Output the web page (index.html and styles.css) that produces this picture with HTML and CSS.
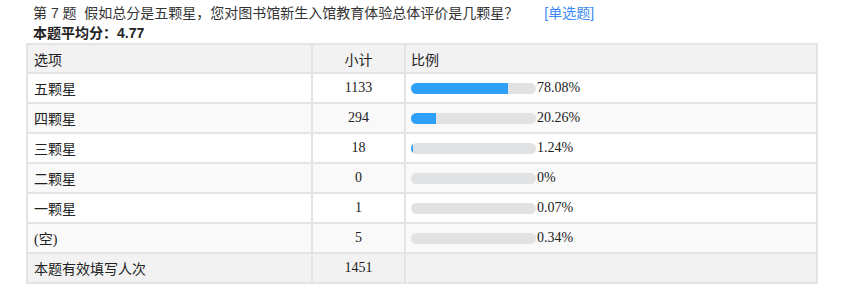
FILE: index.html
```html
<!DOCTYPE html>
<html lang="zh-CN">
<head>
<meta charset="utf-8">
<title>第7题</title>
<link rel="stylesheet" href="styles.css">
</head>
<body>
<div class="wrap">
  <div class="title">
    <div class="q">第 7 题&nbsp;&nbsp;假如总分是五颗星，您对图书馆新生入馆教育体验总体评价是几颗星？<span class="type">[单选题]</span></div>
    <div class="avg">本题平均分：4.77</div>
  </div>
  <table class="stats">
    <colgroup><col class="c1"><col class="c2"><col class="c3"></colgroup>
    <tr class="head"><td>选项</td><td class="num">小计</td><td class="pct">比例</td></tr>
    <tr class="odd"><td>五颗星</td><td class="num">1133</td><td class="pct"><div class="cell"><span class="bar"><span class="fill" style="width:97px"></span></span>78.08%</div></td></tr>
    <tr class="even"><td>四颗星</td><td class="num">294</td><td class="pct"><div class="cell"><span class="bar"><span class="fill" style="width:25px"></span></span>20.26%</div></td></tr>
    <tr class="odd"><td>三颗星</td><td class="num">18</td><td class="pct"><div class="cell"><span class="bar"><span class="fill" style="width:1.5px"></span></span>1.24%</div></td></tr>
    <tr class="even"><td>二颗星</td><td class="num">0</td><td class="pct"><div class="cell"><span class="bar"><span class="fill" style="width:0px"></span></span>0%</div></td></tr>
    <tr class="odd"><td>一颗星</td><td class="num">1</td><td class="pct"><div class="cell"><span class="bar"><span class="fill" style="width:0px"></span></span>0.07%</div></td></tr>
    <tr class="even"><td>(空)</td><td class="num">5</td><td class="pct"><div class="cell"><span class="bar"><span class="fill" style="width:0px"></span></span>0.34%</div></td></tr>
    <tr class="foot"><td>本题有效填写人次</td><td class="num">1451</td><td class="pct"></td></tr>
  </table>
</div>
</body>
</html>
```
FILE: styles.css
```css
html, body {
  margin: 0;
  padding: 0;
  background: #fff;
}
.wrap {
  padding: 3px 0 0 26px;
}
.title {
  padding-left: 7px;
  font-family: "Liberation Sans", "Noto Sans CJK SC", sans-serif;
  font-size: 14px;
  line-height: 20px;
  color: #333;
}
.type {
  color: #3d8af7;
  margin-left: 26px;
}
.avg {
  font-weight: bold;
  color: #222;
}
.stats {
  width: 792px;
  border-spacing: 0;
  border-top: 2px solid #e4e4e4;
  border-left: 2px solid #e4e4e4;
  table-layout: fixed;
  font-family: "Liberation Serif", "Noto Sans CJK SC", serif;
  font-size: 14px;
  color: #222;
}
.c1 { width: 285px; }
.c2 { width: 93px; }
.stats td {
  height: 28px;
  padding: 0 6px;
  border-right: 2px solid #e4e4e4;
  border-bottom: 2px solid #e4e4e4;
  white-space: nowrap;
}
.stats tr.head td {
  height: 27px;
}
.stats td.num {
  text-align: center;
}
.stats td.pct {
  padding-left: 5px;
}
.head td, .foot td {
  background: #f2f2f2;
}
.odd td { background: #fff; }
.even td { background: #f9f9f9; }
.cell {
  display: flex;
  align-items: center;
}
.bar {
  display: block;
  width: 125px;
  height: 11px;
  border-radius: 6px;
  background: #e1e2e4;
  overflow: hidden;
  margin-right: 1px;
}
.fill {
  display: block;
  height: 100%;
  background: #2ea0f8;
}
```
